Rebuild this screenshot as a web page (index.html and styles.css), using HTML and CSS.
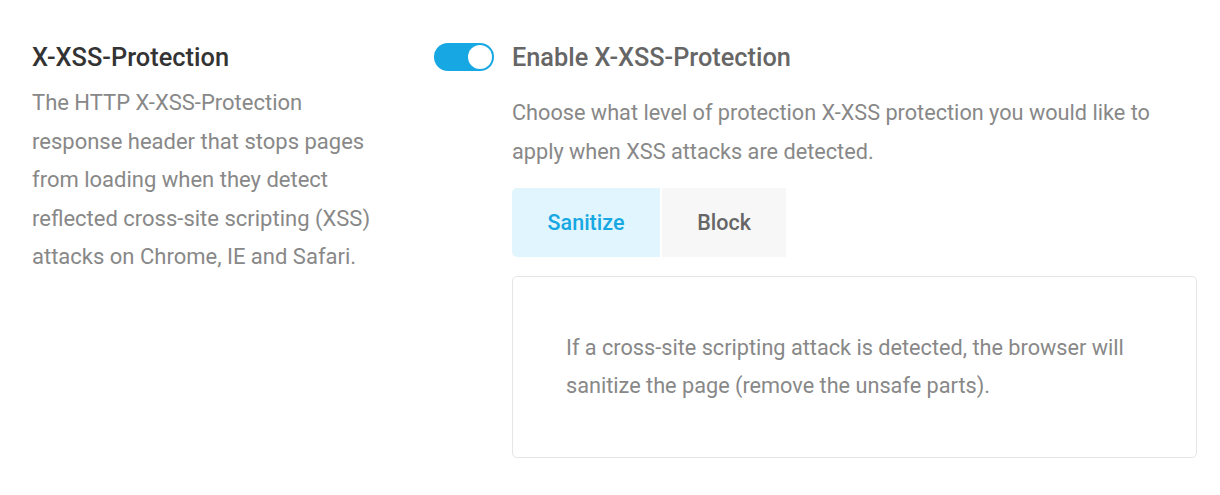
FILE: index.html
```html
<!DOCTYPE html>
<html>
<head>
<meta charset="utf-8">
<link rel="stylesheet" href="styles.css">
</head>
<body>
<div class="setting">
  <div class="info">
    <h2 class="title">X-XSS-Protection</h2>
    <p class="desc">The HTTP X-XSS-Protection response header that stops pages from loading when they detect reflected cross-site scripting (XSS) attacks on Chrome, IE and Safari.</p>
  </div>
  <div class="control">
    <div class="toggle-row">
      <span class="toggle"><span class="knob"></span></span>
      <span class="toggle-label">Enable X-XSS-Protection</span>
    </div>
    <div class="sub">
      <p class="sub-desc">Choose what level of protection X-XSS protection you would like to apply when XSS attacks are detected.</p>
      <div class="tabs">
        <button class="tab active">Sanitize</button>
        <button class="tab">Block</button>
      </div>
      <div class="panel">
        <p>If a cross-site scripting attack is detected, the browser will sanitize the page (remove the unsafe parts).</p>
      </div>
    </div>
  </div>
</div>
</body>
</html>
```
FILE: styles.css
```css
* { box-sizing: border-box; }
body {
  margin: 0;
  background: #fff;
  font-family: Roboto, "Liberation Sans", sans-serif;
}
.setting {
  display: grid;
  grid-template-columns: 402px 1fr;
  padding: 40px 23px 0 32px;
}
.title {
  margin: 0;
  font-size: 25.4px;
  font-weight: 500;
  color: #333;
  line-height: 34px;
}
.desc {
  margin: 10px 0 0;
  width: 350px;
  font-size: 22px;
  line-height: 38.5px;
  color: #888;
}
.toggle-row {
  display: flex;
  align-items: center;
  gap: 18px;
  height: 34px;
}
.toggle {
  position: relative;
  display: inline-block;
  width: 60px;
  height: 28px;
  border-radius: 14px;
  background: #17a8e3;
  flex: none;
}
.knob {
  position: absolute;
  right: 2px;
  top: 2px;
  width: 24px;
  height: 24px;
  border-radius: 50%;
  background: #fff;
}
.toggle-label {
  font-size: 25.3px;
  font-weight: 500;
  color: #666;
}
.sub {
  padding-left: 78px;
}
.sub-desc {
  margin: 19px 0 0;
  font-size: 21.7px;
  line-height: 39px;
  color: #888;
}
.tabs {
  display: flex;
  gap: 2px;
  margin-top: 17px;
}
.tab {
  border: 0;
  height: 69px;
  font-family: Roboto, "Liberation Sans", sans-serif;
  font-size: 21.5px;
  font-weight: 500;
  background: #f7f7f7;
  color: #666;
  padding: 0;
}
.tab:first-child {
  width: 148px;
  border-radius: 5px 0 0 5px;
}
.tab:last-child {
  width: 124px;
}
.tab.active {
  background: #e1f5fe;
  color: #17a8e3;
}
.panel {
  margin-top: 19px;
  border: 1px solid #e5e5e5;
  border-radius: 5px;
  padding: 52px 53px;
  min-height: 182px;
}
.panel p {
  margin: 0;
  font-size: 21.7px;
  line-height: 38px;
  color: #888;
}
```
